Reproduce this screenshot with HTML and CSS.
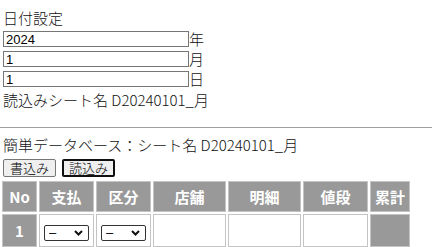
FILE: index.html
```html
<!DOCTYPE html>
<html lang="ja">
<head>
  <meta charset="UTF-8">
  <meta name="viewport" content="width=device-width, initial-scale=1.0">
  <title>簡単データベース</title>
  <link rel="stylesheet" href="styles.css">
</head>
<body>
  <div class="date-section">
    <div class="title">日付設定</div>
    <div class="date-row">
      <input type="text" class="date-input" value="2024"><span class="unit">年</span>
    </div>
    <div class="date-row">
      <input type="text" class="date-input" value="1"><span class="unit">月</span>
    </div>
    <div class="date-row">
      <input type="text" class="date-input" value="1"><span class="unit">日</span>
    </div>
    <div class="sheet-label">読込みシート名 D20240101_月</div>
  </div>

  <hr class="divider">

  <div class="db-section">
    <div class="db-title">簡単データベース：シート名 D20240101_月</div>
    <div class="actions">
      <button type="button" class="btn">書込み</button>
      <button type="button" class="btn btn-active">読込み</button>
    </div>
    <table class="db-table">
      <thead>
        <tr>
          <th class="col-no">No</th>
          <th class="col-pay">支払</th>
          <th class="col-kind">区分</th>
          <th class="col-shop">店舗</th>
          <th class="col-detail">明細</th>
          <th class="col-price">値段</th>
          <th class="col-total">累計</th>
        </tr>
      </thead>
      <tbody>
        <tr>
          <td class="cell-no">1</td>
          <td class="cell-pick">
            <span class="pick-wrap">
              <select class="pick"><option>–</option></select>
              <svg class="chev" width="9" height="6" viewBox="0 0 9 6"><path d="M1 1l3.5 3.5L8 1" fill="none" stroke="#111" stroke-width="2"/></svg>
            </span>
          </td>
          <td class="cell-pick">
            <span class="pick-wrap">
              <select class="pick"><option>–</option></select>
              <svg class="chev" width="9" height="6" viewBox="0 0 9 6"><path d="M1 1l3.5 3.5L8 1" fill="none" stroke="#111" stroke-width="2"/></svg>
            </span>
          </td>
          <td></td>
          <td></td>
          <td></td>
          <td class="cell-total"></td>
        </tr>
      </tbody>
    </table>
  </div>
</body>
</html>
```

FILE: styles.css
```css
body {
  font-family: "Noto Sans CJK JP", "Noto Sans", sans-serif;
  font-size: 15px;
  font-weight: 300;
  margin: 0;
  padding: 7px 3px 0;
  background-color: #ffffff;
  color: #111111;
}
.title {
  line-height: 21px;
  margin-bottom: 3px;
}
.date-row {
  display: flex;
  align-items: center;
  height: 16px;
  margin-bottom: 4px;
}
.date-input {
  box-sizing: border-box;
  width: 186px;
  height: 16px;
  margin: 0;
  padding: 0 2px;
  border: 1px solid #767676;
  font-family: "Liberation Sans", Arial, sans-serif;
  font-size: 13px;
  color: #000000;
}
.unit {
  line-height: 16px;
}
.sheet-label {
  line-height: 17px;
}
.divider {
  border: none;
  border-top: 1px solid #a0a0a0;
  margin: 19px -3px 0;
}
.db-title {
  line-height: 20px;
  margin-top: 7px;
}
.actions {
  display: flex;
  gap: 6px;
  margin-top: 4px;
}
.btn {
  box-sizing: border-box;
  height: 18px;
  padding: 0 6px;
  border: 1px solid #767676;
  border-radius: 2px;
  background-color: #efefef;
  font-family: "Noto Sans CJK JP", sans-serif;
  font-weight: 300;
  font-size: 13px;
  line-height: 14px;
  color: #000000;
}
.btn-active {
  border: 2px solid #101010;
  padding: 0 5px;
}
.db-table {
  border-spacing: 2px;
  margin: 2px 0 0 -3px;
}
.db-table th,
.db-table td {
  border: 1px solid #c4c4c4;
  padding: 0;
}
.db-table th {
  height: 29px;
  background-color: #999999;
  color: #ffffff;
  font-weight: 700;
  font-size: 15px;
}
.db-table td {
  height: 31px;
  background-color: #ffffff;
}
.col-no { width: 33px; }
.col-pay { width: 53px; }
.col-kind { width: 53px; }
.col-shop { width: 71px; }
.col-detail { width: 71px; }
.col-price { width: 63px; }
.col-total { width: 38px; }
.db-table td.cell-no {
  background-color: #999999;
  color: #ffffff;
  font-weight: 700;
  text-align: center;
}
.db-table td.cell-total {
  background-color: #999999;
}
.db-table td.cell-pick {
  text-align: center;
}
.pick-wrap {
  position: relative;
  display: inline-block;
  vertical-align: middle;
}
.pick {
  display: block;
  box-sizing: border-box;
  width: 45px;
  height: 16px;
  margin: 0;
  padding: 0 0 0 4px;
  appearance: none;
  font-family: "Liberation Sans", Arial, sans-serif;
  font-size: 13px;
  line-height: 14px;
  color: #000000;
  border: 1px solid #333333;
  border-radius: 2px;
  background-color: #ffffff;
}
.chev {
  position: absolute;
  right: 6px;
  top: 5px;
  pointer-events: none;
}
```
